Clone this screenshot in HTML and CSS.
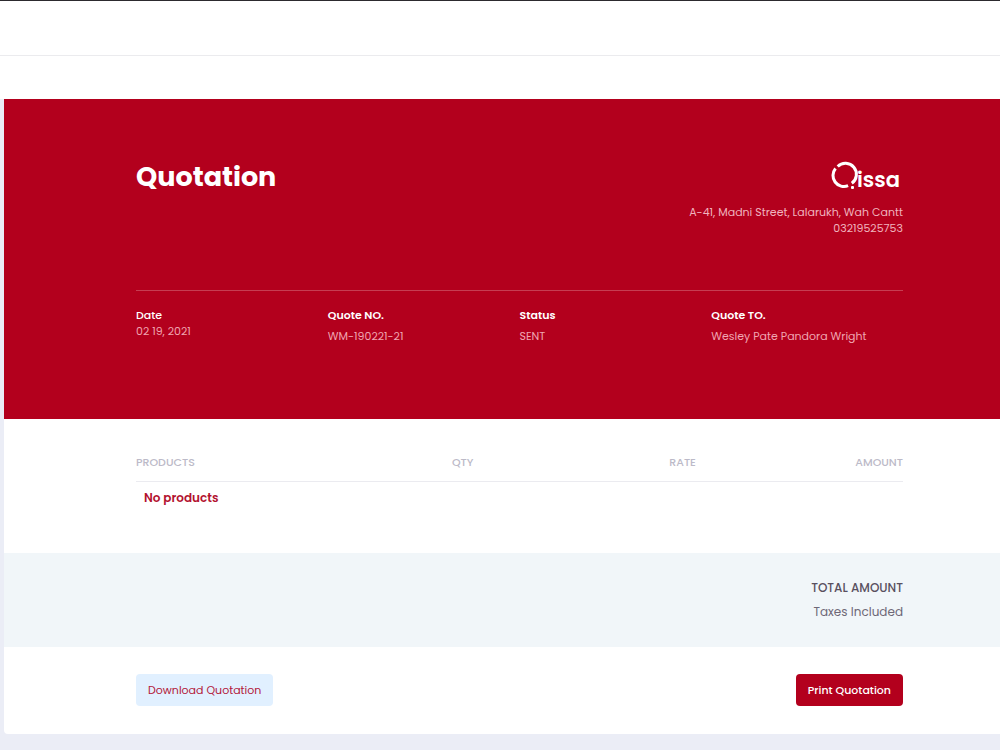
FILE: index.html
```html
<!DOCTYPE html>
<html lang="en">
<head>
<meta charset="utf-8">
<meta name="viewport" content="width=device-width, initial-scale=1">
<title>Quotation</title>
<link rel="stylesheet" href="styles.css">
</head>
<body>
<header class="topbar"></header>
<div class="subheader"></div>
<main class="card">
  <section class="hero">
    <div class="hero-top">
      <h1 class="title">Quotation</h1>
      <div class="company">
        <svg class="logo" width="72" height="38" viewBox="0 0 72 38" role="img" aria-label="Qissa">
          <g fill="none" stroke="#fff" stroke-width="3">
            <path d="M6.7 7.5A11 11 0 1 1 20.8 24.3"/>
            <path d="M4.5 9.5A11 11 0 0 0 17.1 26.7"/>
          </g>
          <rect x="20" y="27" width="3" height="3" rx="1" fill="#fff"/>
          <text class="logo-text" x="26" y="28">issa</text>
        </svg>
        <address class="address">A-41, Madni Street, Lalarukh, Wah Cantt<br>03219525753</address>
      </div>
    </div>
    <dl class="meta">
      <div class="meta-item compact"><dt>Date</dt><dd>02 19, 2021</dd></div>
      <div class="meta-item"><dt>Quote NO.</dt><dd>WM-190221-21</dd></div>
      <div class="meta-item"><dt>Status</dt><dd>SENT</dd></div>
      <div class="meta-item"><dt>Quote TO.</dt><dd>Wesley Pate Pandora Wright</dd></div>
    </dl>
  </section>
  <section class="products">
    <table class="table">
      <thead><tr><th class="col-name">Products</th><th class="col-qty">Qty</th><th class="col-rate">Rate</th><th>Amount</th></tr></thead>
      <tbody><tr><td colspan="4">No products</td></tr></tbody>
    </table>
  </section>
  <section class="total">
    <strong class="total-label">TOTAL AMOUNT</strong>
    <span class="total-note">Taxes Included</span>
  </section>
  <footer class="actions">
    <button type="button" class="btn btn-light">Download Quotation</button>
    <button type="button" class="btn btn-primary">Print Quotation</button>
  </footer>
</main>
</body>
</html>
```
FILE: styles.css
```css
* { box-sizing: border-box; }
body {
  margin: 0;
  background: #ebedf6;
  font-family: Poppins, Inter, "Open Sans", sans-serif;
  font-size: 11px;
  line-height: 16px;
}
.topbar {
  height: 56px;
  background: #fff;
  border-top: 1px solid #2c2a2e;
  border-bottom: 1px solid #ebebee;
}
.subheader { height: 43px; background: #fff; }
.card {
  margin: 0 0 16px 4px;
  background: #fff;
  border-radius: 0 0 0 4px;
}
.hero, .products, .total, .actions { padding-left: 132px; padding-right: 97px; }
.hero {
  padding-top: 60px;
  padding-bottom: 75px;
  background: #b3001d;
  color: #fff;
}
.hero-top {
  display: flex;
  justify-content: space-between;
  min-height: 131px;
}
.title { margin: 0; font-size: 27px; line-height: 36px; font-weight: 700; }
.company { display: flex; flex-direction: column; align-items: flex-end; }
.logo { display: block; margin-bottom: 7px; }
.logo-text { font-size: 21px; font-weight: 600; fill: #fff; }
.address { font-style: normal; text-align: right; color: #f0b3bd; }
.meta {
  display: grid;
  grid-template-columns: repeat(4, 1fr);
  margin: 0;
  padding-top: 16px;
  border-top: 1px solid #c63d52;
}
.meta-item { display: flex; flex-direction: column; gap: 5px; }
.compact { gap: 0; }
.meta dt { font-weight: 600; }
.compact dt { font-weight: 500; }
.meta dd { margin: 0; color: #f0a5b1; }
.products { padding-top: 27px; padding-bottom: 39px; }
.table { width: 100%; border-collapse: collapse; text-align: right; }
.table th {
  padding: 8px 0 11px;
  border-bottom: 1px solid #ebebf0;
  color: #bcbac8;
  font-weight: 500;
  text-transform: uppercase;
}
.table .col-name { text-align: left; }
.col-name { width: 30%; }
.col-qty { width: 14%; }
.col-rate { width: 29%; }
.table td {
  padding: 8px;
  color: #b3122f;
  font-size: 12px;
  font-weight: 600;
  text-align: left;
}
.total {
  display: flex;
  flex-direction: column;
  align-items: flex-end;
  gap: 8px;
  padding-top: 27px;
  padding-bottom: 27px;
  background: #f1f6f9;
  color: #59505f;
  font-size: 12px;
}
.total-label { font-weight: 500; }
.total-note { color: #6e6877; }
.actions {
  display: flex;
  justify-content: space-between;
  padding-top: 27px;
  padding-bottom: 28px;
}
.btn {
  padding: 8px 12px;
  border: 0;
  border-radius: 4px;
  font: 400 11px/16px Poppins, Inter, "Open Sans", sans-serif;
  cursor: pointer;
}
.btn-light { background: #e1f0ff; color: #b3183a; }
.btn-primary { background: #b3001d; color: #fff; font-weight: 500; }
```
